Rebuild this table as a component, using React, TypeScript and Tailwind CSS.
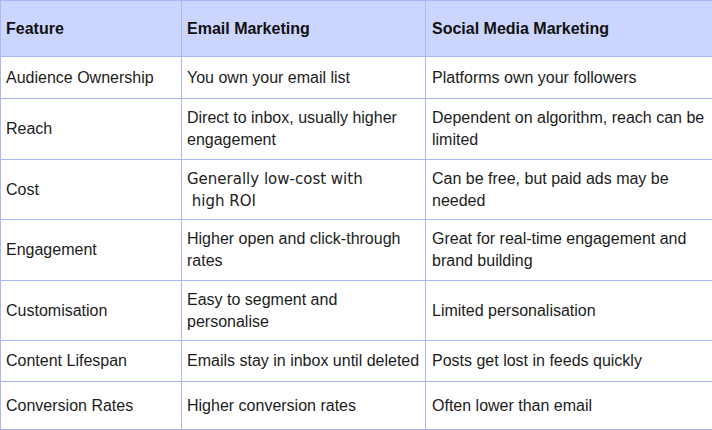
const rows = [
  { h: "h-[42px]", feature: "Audience Ownership", email: "You own your email list", social: "Platforms own your followers" },
  { h: "h-[61px]", feature: "Reach", email: "Direct to inbox, usually higher engagement", social: "Dependent on algorithm, reach can be limited" },
  { h: "h-[60px]", feature: "Cost", email: null, social: "Can be free, but paid ads may be needed" },
  { h: "h-[61px]", feature: "Engagement", email: "Higher open and click-through rates", social: "Great for real-time engagement and brand building" },
  { h: "h-[60px]", feature: "Customisation", email: "Easy to segment and personalise", social: "Limited personalisation" },
  { h: "h-[41px]", feature: "Content Lifespan", email: "Emails stay in inbox until deleted", social: "Posts get lost in feeds quickly" },
  { h: "h-[48px]", feature: "Conversion Rates", email: "Higher conversion rates", social: "Often lower than email" },
];

const cell = "border border-[#a9b6f8] pl-[5px] pr-[2px] align-middle leading-[22px]";

export default function App() {
  return (
    <div className="w-[712px] h-[430px] bg-white font-['Liberation_Sans',Arial,sans-serif] text-[16px] text-[#1c1c1c]">
      <table className="w-[712px] table-fixed border-collapse">
        <colgroup>
          <col className="w-[181px]" />
          <col className="w-[244px]" />
          <col className="w-[287px]" />
        </colgroup>
        <thead>
          <tr className="h-[56px] bg-[#cbd5fd] text-left font-bold text-[#111]">
            <th className={cell}>Feature</th>
            <th className={cell}>Email Marketing</th>
            <th className={cell + " pl-[6px]"}>Social Media Marketing</th>
          </tr>
        </thead>
        <tbody>
          {rows.map((r) => (
            <tr key={r.feature} className={r.h}>
              <td className={cell}>{r.feature}</td>
              <td className={cell}>
                {r.email ?? (
                  <span className="block font-['DejaVu_Sans',sans-serif] text-[15px] leading-[22px] text-[#222] whitespace-pre-wrap">
                    {"Generally low-cost with\n high ROI"}
                  </span>
                )}
              </td>
              <td className={cell + " pl-[6px]"}>{r.social}</td>
            </tr>
          ))}
        </tbody>
      </table>
    </div>
  );
}
